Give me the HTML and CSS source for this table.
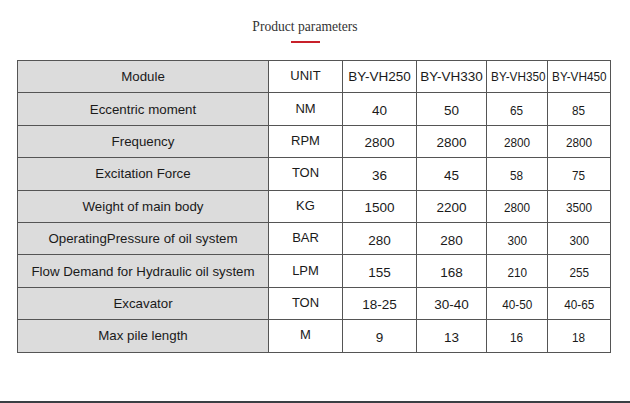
FILE: index.html
```html
<!DOCTYPE html>
<html>
<head>
<meta charset="utf-8">
<link rel="stylesheet" href="styles.css">
</head>
<body>
<div class="page">
  <div class="heading">
    <h2 class="title">Product parameters</h2>
    <div class="accent"></div>
  </div>
  <table class="params">
    <colgroup>
      <col class="c-name"><col class="c-unit"><col class="c-a"><col class="c-b"><col class="c-c"><col class="c-d">
    </colgroup>
    <tr><th>Module</th><td class="unit">UNIT</td><td>BY-VH250</td><td>BY-VH330</td><td class="nar"><span>BY-VH350</span></td><td class="nar"><span>BY-VH450</span></td></tr>
    <tr><th>Eccentric moment</th><td class="unit">NM</td><td class="v">40</td><td class="v">50</td><td class="v nar"><span>65</span></td><td class="v nar"><span>85</span></td></tr>
    <tr><th>Frequency</th><td class="unit">RPM</td><td class="v">2800</td><td class="v">2800</td><td class="v nar"><span>2800</span></td><td class="v nar"><span>2800</span></td></tr>
    <tr><th>Excitation Force</th><td class="unit">TON</td><td class="v">36</td><td class="v">45</td><td class="v nar"><span>58</span></td><td class="v nar"><span>75</span></td></tr>
    <tr><th>Weight of main body</th><td class="unit">KG</td><td class="v">1500</td><td class="v">2200</td><td class="v nar"><span>2800</span></td><td class="v nar"><span>3500</span></td></tr>
    <tr><th>OperatingPressure of oil system</th><td class="unit">BAR</td><td class="v">280</td><td class="v">280</td><td class="v nar"><span>300</span></td><td class="v nar"><span>300</span></td></tr>
    <tr><th>Flow Demand for Hydraulic oil system</th><td class="unit">LPM</td><td class="v">155</td><td class="v">168</td><td class="v nar"><span>210</span></td><td class="v nar"><span>255</span></td></tr>
    <tr><th>Excavator</th><td class="unit">TON</td><td class="v">18-25</td><td class="v">30-40</td><td class="v nar"><span>40-50</span></td><td class="v nar"><span>40-65</span></td></tr>
    <tr><th>Max pile length</th><td class="unit">M</td><td class="v">9</td><td class="v">13</td><td class="v nar"><span>16</span></td><td class="v nar"><span>18</span></td></tr>
  </table>
  <div class="bottom-bar"></div>
</div>
</body>
</html>
```

FILE: styles.css
```css
html, body {
  margin: 0;
  padding: 0;
  background: #ffffff;
}
.page {
  width: 630px;
  height: 403px;
  display: flex;
  flex-direction: column;
  overflow: hidden;
}
.heading {
  width: 610px;
  display: flex;
  flex-direction: column;
  align-items: center;
  padding-top: 19px;
}
.title {
  margin: 0;
  font-family: "Liberation Serif", "Times New Roman", serif;
  font-weight: normal;
  font-size: 13.6px;
  line-height: 16px;
  color: #333333;
}
.accent {
  width: 29px;
  height: 2px;
  background: #c8202a;
  margin-top: 6px;
}
.params {
  margin-top: 17px;
  margin-left: 17px;
  width: 593px;
  border-collapse: collapse;
  table-layout: fixed;
  font-family: "Liberation Sans", Arial, sans-serif;
  font-size: 13.5px;
  color: #1a1a1a;
}
.c-name { width: 251px; }
.c-unit { width: 74px; }
.c-a { width: 74px; }
.c-b { width: 70px; }
.c-c { width: 61px; }
.c-d { width: 63px; }
.params tr { height: 32.4px; }
.params th, .params td {
  border: 1px solid #555555;
  padding: 0;
  text-align: center;
  vertical-align: middle;
  white-space: nowrap;
  font-weight: normal;
}
.params th {
  background: #dcdcdc;
  font-size: 13.3px;
}
.params td.unit { font-size: 13px; padding-bottom: 2px; }
.params td.v { padding-top: 3px; }
.params td.nar span {
  display: inline-block;
  transform: scaleX(0.87);
}
.bottom-bar {
  margin-top: auto;
  height: 2px;
  background: #3a3f44;
}
```
